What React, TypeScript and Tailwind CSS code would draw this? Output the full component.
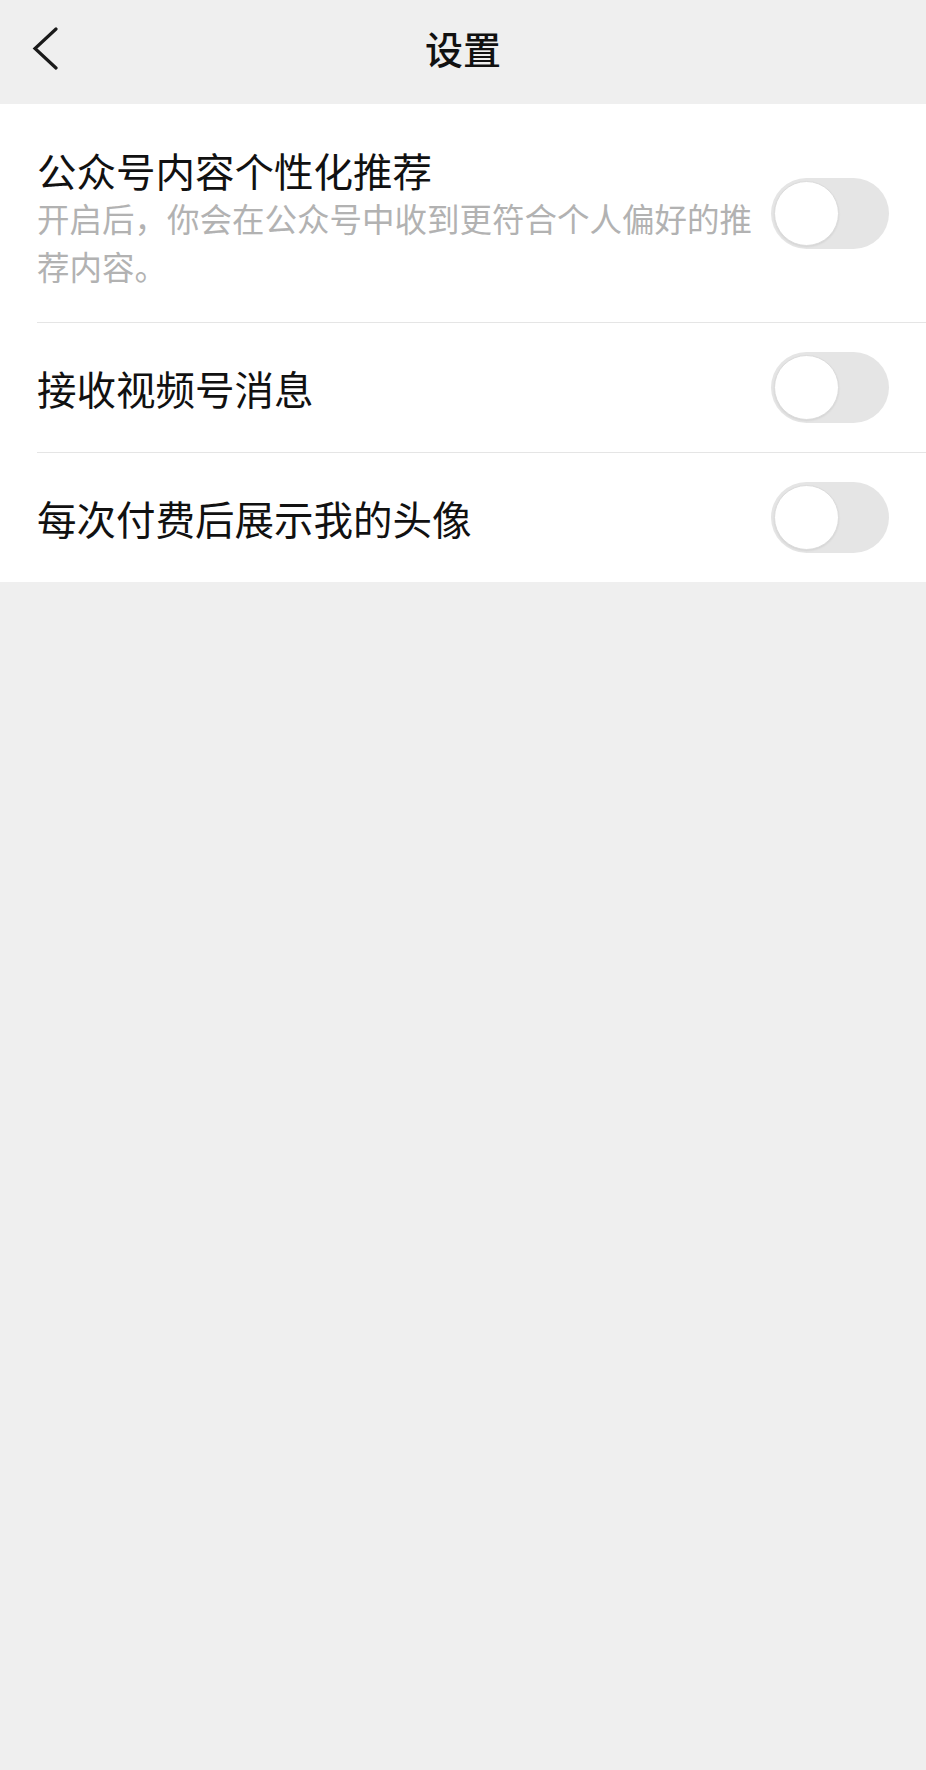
import React from "react";

const Toggle = ({ className = "" }: { className?: string }) => (
  <div className={"relative h-[71px] w-[118px] shrink-0 rounded-full bg-[#e5e5e5] " + className}>
    <div className="absolute left-[3px] top-[3px] h-[65px] w-[65px] rounded-full border border-[#dcdcdc] bg-white shadow-[0_1px_2px_rgba(0,0,0,0.08)]" />
  </div>
);

export default function App() {
  const font = { fontFamily: '"Noto Sans CJK SC", "Noto Sans", sans-serif' };
  return (
    <div className="min-h-[1770px] w-[926px] bg-[#efefef]" style={font}>
      <div className="relative flex h-[104px] items-center justify-center pb-[8px]">
        <svg className="absolute left-[30px] top-[27px]" width="32" height="44" viewBox="0 0 32 44">
          <polyline points="26,2 5,21.5 26,41" fill="none" stroke="#1a1a1a" strokeWidth="3.2" strokeLinecap="round" strokeLinejoin="miter" />
        </svg>
        <span className="text-[38px] font-medium leading-none text-[#111]">设置</span>
      </div>
      <div className="bg-white">
        <div className="flex items-center pl-[37px] pr-[37px] pt-[42px] pb-[32px]">
          <div className="w-[726px]">
            <div className="text-[39.5px] leading-[48px] text-[#111]">公众号内容个性化推荐</div>
            <div className="text-[32.5px] leading-[48px] text-[#b2b2b2]">
              开启后，你会在公众号中收到更符合个人偏好的推荐内容。
            </div>
          </div>
          <div className="flex-1" />
          <Toggle className="mb-[10px]" />
        </div>
        <div className="ml-[37px] h-px bg-[#e5e5e5]" />
        <div className="flex h-[129px] items-center pl-[37px] pr-[37px]">
          <div className="flex-1 text-[39.5px] leading-[48px] text-[#111]">接收视频号消息</div>
          <Toggle />
        </div>
        <div className="ml-[37px] h-px bg-[#e5e5e5]" />
        <div className="flex h-[129px] items-center pl-[37px] pr-[37px]">
          <div className="flex-1 text-[39.5px] leading-[48px] text-[#111]">每次付费后展示我的头像</div>
          <Toggle />
        </div>
      </div>
    </div>
  );
}
